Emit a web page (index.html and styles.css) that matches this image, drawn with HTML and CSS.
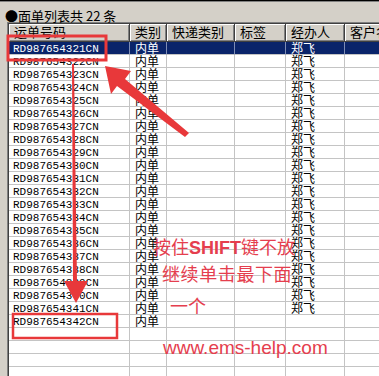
FILE: index.html
```html
<!DOCTYPE html>
<html lang="zh-CN">
<head>
    <meta charset="UTF-8">
    <title>面单列表</title>
    <link rel="stylesheet" href="styles.css">
</head>
<body>
    <div class="window">
        <div class="title">●面单列表共 22 条</div>
        <div class="list">
            <div class="list-inner">
                <div class="row head">
                    <div class="cell">运单号码</div>
                    <div class="cell">类别</div>
                    <div class="cell">快递类别</div>
                    <div class="cell">标签</div>
                    <div class="cell">经办人</div>
                    <div class="cell">客户名称</div>
                </div>
                <div class="row selected"><div class="cell code">RD987654321CN</div><div class="cell">内单</div><div class="cell"></div><div class="cell"></div><div class="cell">郑飞</div><div class="cell"></div></div>
                <div class="row"><div class="cell code">RD987654322CN</div><div class="cell">内单</div><div class="cell"></div><div class="cell"></div><div class="cell">郑飞</div><div class="cell"></div></div>
                <div class="row"><div class="cell code">RD987654323CN</div><div class="cell">内单</div><div class="cell"></div><div class="cell"></div><div class="cell">郑飞</div><div class="cell"></div></div>
                <div class="row"><div class="cell code">RD987654324CN</div><div class="cell">内单</div><div class="cell"></div><div class="cell"></div><div class="cell">郑飞</div><div class="cell"></div></div>
                <div class="row"><div class="cell code">RD987654325CN</div><div class="cell">内单</div><div class="cell"></div><div class="cell"></div><div class="cell">郑飞</div><div class="cell"></div></div>
                <div class="row"><div class="cell code">RD987654326CN</div><div class="cell">内单</div><div class="cell"></div><div class="cell"></div><div class="cell">郑飞</div><div class="cell"></div></div>
                <div class="row"><div class="cell code">RD987654327CN</div><div class="cell">内单</div><div class="cell"></div><div class="cell"></div><div class="cell">郑飞</div><div class="cell"></div></div>
                <div class="row"><div class="cell code">RD987654328CN</div><div class="cell">内单</div><div class="cell"></div><div class="cell"></div><div class="cell">郑飞</div><div class="cell"></div></div>
                <div class="row"><div class="cell code">RD987654329CN</div><div class="cell">内单</div><div class="cell"></div><div class="cell"></div><div class="cell">郑飞</div><div class="cell"></div></div>
                <div class="row"><div class="cell code">RD987654330CN</div><div class="cell">内单</div><div class="cell"></div><div class="cell"></div><div class="cell">郑飞</div><div class="cell"></div></div>
                <div class="row"><div class="cell code">RD987654331CN</div><div class="cell">内单</div><div class="cell"></div><div class="cell"></div><div class="cell">郑飞</div><div class="cell"></div></div>
                <div class="row"><div class="cell code">RD987654332CN</div><div class="cell">内单</div><div class="cell"></div><div class="cell"></div><div class="cell">郑飞</div><div class="cell"></div></div>
                <div class="row"><div class="cell code">RD987654333CN</div><div class="cell">内单</div><div class="cell"></div><div class="cell"></div><div class="cell">郑飞</div><div class="cell"></div></div>
                <div class="row"><div class="cell code">RD987654334CN</div><div class="cell">内单</div><div class="cell"></div><div class="cell"></div><div class="cell">郑飞</div><div class="cell"></div></div>
                <div class="row"><div class="cell code">RD987654335CN</div><div class="cell">内单</div><div class="cell"></div><div class="cell"></div><div class="cell">郑飞</div><div class="cell"></div></div>
                <div class="row"><div class="cell code">RD987654336CN</div><div class="cell">内单</div><div class="cell"></div><div class="cell"></div><div class="cell">郑飞</div><div class="cell"></div></div>
                <div class="row"><div class="cell code">RD987654337CN</div><div class="cell">内单</div><div class="cell"></div><div class="cell"></div><div class="cell">郑飞</div><div class="cell"></div></div>
                <div class="row"><div class="cell code">RD987654338CN</div><div class="cell">内单</div><div class="cell"></div><div class="cell"></div><div class="cell">郑飞</div><div class="cell"></div></div>
                <div class="row"><div class="cell code">RD987654339CN</div><div class="cell">内单</div><div class="cell"></div><div class="cell"></div><div class="cell">郑飞</div><div class="cell"></div></div>
                <div class="row"><div class="cell code">RD987654340CN</div><div class="cell">内单</div><div class="cell"></div><div class="cell"></div><div class="cell">郑飞</div><div class="cell"></div></div>
                <div class="row"><div class="cell code">RD987654341CN</div><div class="cell">内单</div><div class="cell"></div><div class="cell"></div><div class="cell">郑飞</div><div class="cell"></div></div>
                <div class="row"><div class="cell code">RD987654342CN</div><div class="cell">内单</div><div class="cell"></div><div class="cell"></div><div class="cell"></div><div class="cell"></div></div>
                <div class="row"><div class="cell"></div><div class="cell"></div><div class="cell"></div><div class="cell"></div><div class="cell"></div><div class="cell"></div></div>
                <div class="row"><div class="cell"></div><div class="cell"></div><div class="cell"></div><div class="cell"></div><div class="cell"></div><div class="cell"></div></div>
                <div class="row"><div class="cell"></div><div class="cell"></div><div class="cell"></div><div class="cell"></div><div class="cell"></div><div class="cell"></div></div>
                <div class="row"><div class="cell"></div><div class="cell"></div><div class="cell"></div><div class="cell"></div><div class="cell"></div><div class="cell"></div></div>
            </div>
        </div>

        <!-- red annotations drawn over the list -->
        <svg class="marks" width="379" height="376" viewBox="0 0 379 376">
            <rect x="8" y="36" width="98" height="24" fill="none" stroke="#e8383a" stroke-width="3"/>
            <rect x="13" y="314" width="104" height="24" fill="none" stroke="#e8383a" stroke-width="2.5"/>
            <polygon points="105,66 131,71 125,79 189,133 185,137 117,86 111,94" fill="#e8383a"/>
            <polygon points="72,64 74,64 77,283 73,283" fill="#e8383a"/>
            <polygon points="64,281 88,281 76,303" fill="#e8383a"/>
        </svg>
        <div class="note note-shift">按住<b>SHIFT</b>键不放</div>
        <div class="note note-click">继续单击最下面</div>
        <div class="note note-one">一个</div>
        <div class="note note-site">www.ems-help.com</div>
    </div>
</body>
</html>
```

FILE: styles.css
```css
body {
    margin: 0;
    padding: 0;
    background: #d4d0c8;
    font-family: "Noto Sans CJK SC", "Liberation Sans", sans-serif;
    color: #000;
}

.window {
    position: relative;
    width: 379px;
    height: 376px;
    overflow: hidden;
    background: #d4d0c8;
    border-top: 1px solid #000;
    box-sizing: border-box;
}

.title {
    height: 21px;
    box-sizing: border-box;
    padding: 7px 0 0 5px;
    font-size: 13px;
    line-height: 13px;
    white-space: nowrap;
    border-top: 1px solid #808080;
}

.list {
    margin-left: 7px;
    width: 420px;
    border-top: 1px solid #808080;
    border-left: 1px solid #808080;
    background: #fff;
}

.list-inner {
    border-top: 1px solid #404040;
    border-left: 1px solid #404040;
}

.row {
    display: grid;
    grid-template-columns: 121px 37px 68px 51px 59px 100px;
}

.cell {
    height: 12px;
    padding-left: 5px;
    font-size: 12px;
    line-height: 12px;
    white-space: nowrap;
    border-right: 1px solid #c4c4c4;
    border-bottom: 1px solid #c4c4c4;
}

.cell.code {
    height: 10px;
    padding: 2px 0 0 4px;
    font-family: "Liberation Mono", monospace;
    font-size: 11px;
    line-height: 10px;
}

.head .cell {
    height: 17px;
    background: #d4d0c8;
    font-size: 13px;
    line-height: 16px;
    border-right: 1px solid #404040;
    border-bottom: 1px solid #404040;
    box-shadow: inset 1px 1px #fff, inset -1px -1px #808080;
}

.selected {
    background: #0a246a;
    color: #fff;
}

.selected .cell {
    border-right-color: #7d8cb4;
}

.marks {
    position: absolute;
    top: -1px;
    left: 0;
    pointer-events: none;
}

.note {
    position: absolute;
    color: #e53e4e;
    font-size: 18px;
    line-height: 18px;
    white-space: nowrap;
}

.note b {
    font-family: "Liberation Sans", sans-serif;
}

.note-shift {
    left: 153px;
    top: 236px;
}

.note-click {
    left: 162px;
    top: 263px;
    letter-spacing: 0.6px;
}

.note-one {
    left: 170px;
    top: 295px;
}

.note-site {
    left: 163px;
    top: 337px;
    font-family: "Liberation Sans", sans-serif;
    font-size: 19px;
    line-height: 19px;
}
```
